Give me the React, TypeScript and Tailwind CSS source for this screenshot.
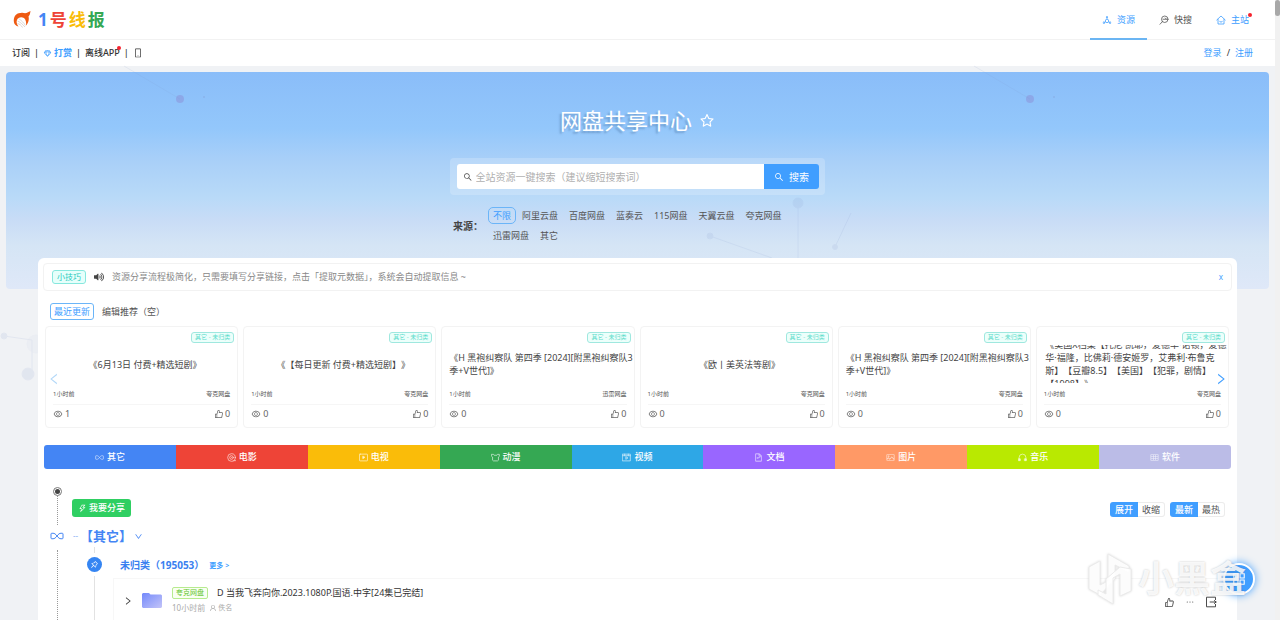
import type { ReactNode } from 'react';
import {
  AiOutlineAppstore,
  AiOutlineDeploymentUnit,
  AiOutlineDown,
  AiOutlineEllipsis,
  AiOutlineEye,
  AiOutlineFileText,
  AiOutlineLeft,
  AiOutlineLike,
  AiOutlineMobile,
  AiOutlinePicture,
  AiOutlinePushpin,
  AiOutlineRight,
  AiOutlineSearch,
  AiOutlineSketch,
  AiOutlineStar,
  AiOutlineTable,
  AiOutlineThunderbolt,
  AiOutlineUser,
} from 'react-icons/ai';
import { FaVolumeUp } from 'react-icons/fa';

type IconProps = { className?: string; children?: ReactNode };

function Stroke({ className, children }: IconProps) {
  return (
    <svg className={className} viewBox="0 0 20 20" fill="none" stroke="currentColor" strokeWidth="1.6" strokeLinejoin="round" strokeLinecap="round">
      {children}
    </svg>
  );
}

const QuickIcon = ({ className }: IconProps) => (
  <Stroke className={className}>
    <circle cx="11.5" cy="8.5" r="6.5" />
    <path d="M7 13 2 18.5M8 8.5h7M12.5 6l2.5 2.5" />
  </Stroke>
);

const HomeIcon = ({ className }: IconProps) => (
  <Stroke className={className}>
    <path d="M1.5 10 10 2l8.500 8M4 8.500V18h12V8.500M7 12.500c1 2.500 5 2.500 6 0" />
  </Stroke>
);

const ExportIcon = ({ className }: IconProps) => (
  <Stroke className={className}>
    <path d="M17.500 6V2h-15v16h15v-4M8.500 10h10M15.500 7.500l3 2.500-3 2.500" />
  </Stroke>
);

const InfinityIcon = ({ className }: IconProps) => (
  <svg className={className} viewBox="0 0 28 16" fill="none" stroke="currentColor" strokeWidth="2">
    <path d="M14 8C11 4 9 2.500 6 2.500H3.500Q2 2.500 2 4v8q0 1.500 1.500 1.500H6C9 13.500 11 12 14 8s5-5.500 8-5.500h2.500Q26 2.500 26 4v8q0 1.500-1.500 1.500H22C19 13.500 17 12 14 8Z" />
  </svg>
);

const FilmIcon = ({ className }: IconProps) => (
  <Stroke className={className}>
    <circle cx="10" cy="10" r="8.500" />
    <circle cx="10" cy="10" r="4" />
    <path d="M10 10h.1M15 17h4" />
  </Stroke>
);

const TvIcon = ({ className }: IconProps) => (
  <Stroke className={className}>
    <rect x="1" y="2.500" width="18" height="15" rx="1.500" />
    <path d="M8.500 7.500v5l4-2.500Z" fill="currentColor" />
  </Stroke>
);

const CatIcon = ({ className }: IconProps) => (
  <Stroke className={className}>
    <path d="M1.500 3h4L7 5h6l1.500-2h4v4.500L16.500 9v7l-2 1.500h-9l-2-1.500V9l-2-1.500Z" />
  </Stroke>
);

const VideoIcon = ({ className }: IconProps) => (
  <Stroke className={className}>
    <rect x="1.500" y="2.500" width="17" height="15" />
    <path d="M1.500 6h17M6 2.500V6M14 2.500V6M8.500 9v5l4-2.500Z" />
  </Stroke>
);

const HeadphoneIcon = ({ className }: IconProps) => (
  <Stroke className={className}>
    <path d="M2.500 14v-4a7.500 7.500 0 0 1 15 0v4" />
    <path d="M1.500 13h3.500v4H1.500ZM15 13h3.500v4H15Z" fill="currentColor" />
  </Stroke>
);

const categories = [
  { name: '其它', Icon: InfinityIcon, color: 'bg-[#4485f4] rounded-l-[3px]' },
  { name: '电影', Icon: FilmIcon, color: 'bg-[#ee4437]' },
  { name: '电视', Icon: TvIcon, color: 'bg-[#fabc09]' },
  { name: '动漫', Icon: CatIcon, color: 'bg-[#35a853]' },
  { name: '视频', Icon: VideoIcon, color: 'bg-[#2ea7e6]' },
  { name: '文档', Icon: AiOutlineFileText, color: 'bg-[#9966ff]' },
  { name: '图片', Icon: AiOutlinePicture, color: 'bg-[#ff9966]' },
  { name: '音乐', Icon: HeadphoneIcon, color: 'bg-[#b9e901]' },
  { name: '软件', Icon: AiOutlineTable, color: 'bg-[#bbbce7] rounded-r-[3px]' },
];

const sources = ['不限', '阿里云盘', '百度网盘', '蓝奏云', '115网盘', '天翼云盘', '夸克网盘', '迅雷网盘', '其它'];

const recent = [
  { title: '《6月13日 付费+精选短剧》', drive: '夸克网盘', views: 1 },
  { title: '《【每日更新 付费+精选短剧】》', drive: '夸克网盘', views: 0 },
  { title: '《H 黑袍纠察队 第四季 [2024][附黑袍纠察队3季+V世代]》', drive: '迅雷网盘', views: 0 },
  { title: '《欧丨美英法等剧》', drive: '夸克网盘', views: 0 },
  { title: '《H 黑袍纠察队 第四季 [2024][附黑袍纠察队3季+V世代]》', drive: '夸克网盘', views: 0 },
  {
    title: '《美国X档案【托尼·凯耶，爱德华·诺顿，爱德\n华·福隆，比佛莉·德安姬罗，艾弗利·布鲁克\n斯】【豆瓣8.5】【美国】【犯罪，剧情】\n【1998】》',
    drive: '夸克网盘',
    views: 0,
  },
];

function Network() {
  return (
    <svg className="pointer-events-none absolute top-0 left-0 h-[620px] w-[1280px]" fill="#7f93c8" stroke="#7f93c8">
      <g opacity="0.3" stroke="none">
        <circle cx="180" cy="99" r="4" fill="#8a6fc0" />
        <circle cx="1030" cy="99" r="4" fill="#8a6fc0" />
        <circle cx="204" cy="97" r="1" />
        <circle cx="1054" cy="97" r="1" />
      </g>
      <g opacity="0.12">
        <path d="M124 66 180 99M974 66 1030 99M798 203v55M710 236l62 22M835 247l16-34M4 336l28 4v34" fill="none" />
        <circle cx="798" cy="203" r="5" />
        <circle cx="835" cy="247" r="2.500" />
        <circle cx="710" cy="236" r="3" />
        <circle cx="28" cy="374" r="6" />
        <circle cx="4" cy="336" r="3" />
        <circle cx="36" cy="344" r="9" opacity="0.4" />
      </g>
    </svg>
  );
}

function Header() {
  const item = 'relative flex h-10 items-center gap-[5px] px-3';
  return (
    <header className="relative bg-white">
      <div className="flex h-10 items-center justify-between border-b border-[#f2f2f2] pr-[14px] pl-3">
        <a href="#home" className="flex items-center gap-[6px]">
          <svg className="size-5" viewBox="0 0 40 40">
            <path d="M4 25C2 14 8 5 18 6c4-1 7 1 11 0l8-4c-1 5-1 8-4 11 2 7-1 14-5 18 1-6 0-11-4-15-6-3-12-1-14 4-2 4 0 9 3 13C8 32 5 29 4 25Z" fill="#ee5a12" />
            <path d="M11 22c5 2 10 6 15 12M13 17c6 4 11 9 14 14M11 27c4 1 8 4 10 8" fill="none" stroke="#c9bdb7" strokeWidth="1.200" />
          </svg>
          <span className="flex gap-[2px] text-[17px] leading-5 font-bold">
            <span className="text-[#4485f4]">1</span>
            <span className="text-[#ee4437]">号</span>
            <span className="text-[#fabc09]">线</span>
            <span className="text-[#35a853]">报</span>
          </span>
        </a>
        <nav className="flex h-full">
          <a href="#res" className={`${item} text-[#409eff]`}>
            <AiOutlineDeploymentUnit className="size-[10px]" />
            资源
            <span className="absolute inset-x-0 bottom-0 h-[2px] bg-[#6bb5f3]" />
          </a>
          <a href="#quick" className={item}>
            <QuickIcon className="size-[10px]" />
            快搜
          </a>
          <a href="#main" className={`${item} text-[#409eff]`}>
            <HomeIcon className="size-[10px]" />
            主站
            <span className="absolute top-[13px] right-[9px] size-1 rounded-full bg-[#f5222d]" />
          </a>
        </nav>
      </div>
      <div className="flex h-[26px] items-center justify-between pr-[22px] pl-3 text-[#333]">
        <div className="flex items-center gap-1 font-medium">
          <a href="#subscribe">订阅</a>
          <span>|</span>
          <a href="#reward" className="flex items-center gap-[2px] font-bold text-[#409eff]">
            <AiOutlineSketch className="size-[9px]" />
            打赏
          </a>
          <span>|</span>
          <a href="#app" className="relative">
            离线APP
            <span className="absolute top-0 -right-px size-1 rounded-full bg-[#f5222d]" />
          </a>
          <span>|</span>
          <a href="#mobile" aria-label="手机版">
            <AiOutlineMobile className="size-[10px]" />
          </a>
        </div>
        <div className="flex gap-[5px]">
          <a href="#login" className="text-[#409eff]">登录</a>
          <span>/</span>
          <a href="#register" className="text-[#409eff]">注册</a>
        </div>
      </div>
    </header>
  );
}

function Hero() {
  return (
    <section className="mx-[6px] mt-[6px] h-[217px] rounded-[4px] bg-[linear-gradient(180deg,#8abdf9_0%,#93c7fb_26%,#a8cff8_40%,#b9daf8_58%,#c8dcf6_68%,#d5e5f5_80%,#dfe8f8_100%)]">
      <h1 className="flex items-center justify-center gap-[7px] pt-[33px] text-[22px] leading-[30px] text-white">
        <span className="[text-shadow:-2px_2px_2px_rgba(70,110,160,0.45)]">网盘共享中心</span>
        <AiOutlineStar className="mt-[2px] size-4" />
      </h1>
      <div className="mx-auto mt-[23px] w-[375px]">
        <form className="flex rounded-[4px] bg-white/20 py-[6px] pr-[6px] pl-[7px]">
          <label className="flex h-[25px] flex-1 items-center gap-[3px] rounded-l-[3px] bg-white pl-[6px]">
            <AiOutlineSearch className="size-[10px] text-[#444]" />
            <input
              type="text"
              aria-label="搜索"
              placeholder="全站资源一键搜索（建议缩短搜索词）"
              className="w-full text-[10px] outline-none placeholder:text-[#b0b0b0]"
            />
          </label>
          <button type="button" className="flex w-[55px] items-center justify-center gap-[5px] rounded-r-[3px] bg-[#409eff] text-[10px] text-white">
            <AiOutlineSearch className="size-[10px]" />
            搜索
          </button>
        </form>
        <div className="mt-3 flex items-center pl-[3px]">
          <span className="w-[35px] text-[10px] font-bold whitespace-nowrap text-[#444]">来源：</span>
          <div className="flex flex-1 flex-wrap gap-x-px gap-y-[3px] text-[#555]">
            {sources.map((s, i) => (
              <button
                key={s}
                type="button"
                className={`h-[17px] rounded-[5px] border px-1 ${i === 0 ? 'border-[#6bb5f8] text-[#409eff]' : 'border-transparent'}`}
              >
                {s}
              </button>
            ))}
          </div>
        </div>
      </div>
    </section>
  );
}

function RecentCard({ title, drive, views }: (typeof recent)[number]) {
  return (
    <article className="h-[102px] rounded-[4px] border border-[#f3f3f3] bg-white px-[7px] pt-[5px]">
      <div className="-mr-1 flex justify-end">
        <span className="h-[11px] rounded-[3px] border border-[#9fe8df] bg-[#ecfffb] px-[3px] text-[6px] leading-[9px] text-[#5fdccb]">其它 - 未归类</span>
      </div>
      <div className="mt-[2px] -mr-[7px] flex h-[38px] items-center justify-center overflow-hidden">
        <h3 className="text-[9px] leading-[13px] whitespace-pre-line text-[#444] [text-spacing-trim:space-all]">{title}</h3>
      </div>
      <div className="mt-[5px] flex justify-between text-[6px] leading-[13px] text-[#555]">
        <span>1小时前</span>
        <span>{drive}</span>
      </div>
      <div className="mt-[3px] flex h-[19px] items-center justify-between border-t border-[#f6f6f6] text-[#666]">
        <span className="flex items-center gap-[2px]">
          <AiOutlineEye className="size-[10px]" />
          {views}
        </span>
        <span className="flex items-center gap-px">
          <AiOutlineLike className="size-[10px]" />0
        </span>
      </div>
    </article>
  );
}

function Toggle({ on, off }: { on: string; off: string }) {
  return (
    <div className="flex h-[15px] leading-[13px]">
      <button type="button" className="w-7 rounded-l-[3px] bg-[#409eff] font-medium text-white">{on}</button>
      <button type="button" className="w-[27px] rounded-r-[3px] border border-l-0 border-[#ececec] text-[#555]">{off}</button>
    </div>
  );
}

function Timeline() {
  const dotted = 'w-px flex-1 border-l border-dotted border-[#999]';
  return (
    <div className="flex flex-1 flex-col px-[6px] pt-4">
      <div className="flex h-10">
        <div className="flex w-[26px] flex-col items-center pt-[2px]">
          <span className="flex size-[9px] items-center justify-center rounded-full border border-[#777]">
            <span className="size-[5px] rounded-full bg-[#444]" />
          </span>
          <span className={dotted} />
        </div>
        <div className="flex flex-1 items-start justify-between pt-[14px] pr-[6px] pl-[2px]">
          <button type="button" className="flex h-[18px] items-center gap-[2px] rounded-[3px] bg-[#2fcf62] px-[6px] font-medium text-white">
            <AiOutlineThunderbolt className="size-[9px]" />
            我要分享
          </button>
          <div className="mt-[3px] flex gap-[5px]">
            <Toggle on="展开" off="收缩" />
            <Toggle on="最新" off="最热" />
          </div>
        </div>
      </div>
      <div className="flex h-[22px] items-center text-[#4485f4]">
        <span className="flex w-[26px] justify-center">
          <InfinityIcon className="h-2 w-[14px]" />
        </span>
        <span className="w-[10px] pl-[3px] text-[8px] leading-3 text-[#8fb4f5]">--</span>
        <h2 className="text-[13px] leading-[18px] font-bold">【其它】</h2>
        <AiOutlineDown className="ml-[2px] size-[9px]" />
      </div>
      <div className="flex flex-1">
        <div className="flex w-[26px] flex-col items-center pt-[3px]">
          <span className={dotted} />
        </div>
        <div className="flex w-[43px] flex-col pl-[17px]">
          <span className="ml-[7px] h-[6px] w-px bg-[#e2e2e2]" />
          <span className="my-1 flex size-[15px] items-center justify-center rounded-full bg-[#3585f2] text-white">
            <AiOutlinePushpin className="size-[9px]" />
          </span>
          <span className="ml-[7px] w-px flex-1 bg-[#e2e2e2]" />
        </div>
        <div className="flex flex-1 flex-col pt-[11px]">
          <div className="flex items-center gap-[5px] pl-[7px] leading-[15px] font-bold">
            <h3 className="text-[10px] text-[#3a7ff0]">未归类（195053）</h3>
            <a href="#more" className="text-[7px] text-[#409eff]">更多 &gt;</a>
          </div>
          <div className="mt-[5px] flex min-h-[41px] flex-1 items-start border-t border-l border-[#f7f7f7] pr-[14px] pl-[9px]">
            <AiOutlineRight className="mt-[17px] size-[10px] text-[#333]" />
            <svg className="mt-[13px] ml-[9px] h-4 w-5" viewBox="0 0 20 16">
              <defs>
                <linearGradient id="folder" x1="0" y1="0" x2="1" y2="1">
                  <stop offset="0" stopColor="#7389fb" />
                  <stop offset="1" stopColor="#c3c4f8" />
                </linearGradient>
              </defs>
              <path d="M0 2 1 1h6l1.500 1.500H19l1 1V15l-1 1H1l-1-1Z" fill="url(#folder)" />
            </svg>
            <div className="ml-[10px] pt-[6px]">
              <div className="flex items-center gap-[9px]">
                <span className="h-3 rounded-[2px] border border-[#b7eb8f] bg-[#f9fff2] px-[3px] text-[7px] leading-[10px] text-[#5fc42c]">夸克网盘</span>
                <a href="#item" className="text-[9px] leading-[15px] text-[#333]">D 当我飞奔向你.2023.1080P.国语.中字[24集已完结]</a>
              </div>
              <div className="mt-px flex items-center gap-[4px] text-[8px] leading-[14px] text-[#aaa]">
                <span>10小时前</span>
                <span className="flex items-center gap-px">
                  <AiOutlineUser className="size-2" />
                  <span className="text-[7px]">佚名</span>
                </span>
              </div>
            </div>
            <div className="mt-[17px] ml-auto flex items-center gap-[10px] text-[#444]">
              <button type="button" aria-label="点赞"><AiOutlineLike className="size-[11px]" /></button>
              <button type="button" aria-label="更多"><AiOutlineEllipsis className="size-[10px]" /></button>
              <button type="button" aria-label="打开"><ExportIcon className="size-3" /></button>
            </div>
          </div>
        </div>
      </div>
    </div>
  );
}

function Watermark() {
  return (
    <div className="pointer-events-none absolute right-[34px] bottom-[15px] flex items-center gap-[6px]">
      <svg className="h-[52px] w-[44px] drop-shadow-[0_0_1px_rgba(0,0,0,0.15)]" viewBox="0 0 44 52" fill="#fff" fillOpacity="0.9" stroke="#eaeaea">
        <path d="M1 14 12 8v24l8-4V1l21 12v6L27 12v14l-15 16L1 36Z" />
        <path d="M43 16v22l-11 5V21l-7 4v26L10 42v-5l8 4V26l14-12Z" />
      </svg>
      <span className="text-[36px] leading-[40px] font-bold text-white/85 [text-shadow:0_0_2px_rgba(0,0,0,0.25)]">小黑盒</span>
    </div>
  );
}

export default function App() {
  return (
    <div className="relative flex min-h-screen overflow-hidden bg-[#f0f2f5] font-['Noto_Sans','Noto_Sans_CJK_SC',sans-serif] text-[9px] leading-[14px] text-[#555]">
      <div className="flex min-w-0 flex-1 flex-col">
        <Header />
        <Hero />
        <main className="relative z-10 mx-[38px] -mt-[31px] flex flex-1 flex-col rounded-t-[6px] bg-white">
          <div className="mx-[5px] mt-[5px] flex h-7 items-center rounded-[4px] border border-[#f2f2f2] px-2">
            <span className="h-[14px] rounded-[3px] border border-[#87e8de] bg-[#e6fffb] px-1 text-[8px] leading-[12px] text-[#25c9bb]">小技巧</span>
            <FaVolumeUp className="mx-2 size-[10px] text-[#444]" />
            <p className="text-[#888]">资源分享流程极简化，只需要填写分享链接，点击「提取元数据」，系统会自动提取信息 ~</p>
            <button type="button" className="ml-auto text-[8px] text-[#409eff]">x</button>
          </div>
          <div className="mt-3 flex h-[17px] gap-1 pl-3">
            <button type="button" className="rounded-[3px] border border-[#6bb5f8] px-[3px] leading-[15px] text-[#409eff]">最近更新</button>
            <button type="button" className="px-1">编辑推荐（空）</button>
          </div>
          <div className="relative mt-[6px] mr-2 ml-[7px] grid grid-cols-6 gap-x-[5px]">
            {recent.map((r, i) => (
              <RecentCard key={i} {...r} />
            ))}
            <button type="button" aria-label="上一页" className="absolute top-[46px] left-[2px] text-[#b3d8f8]">
              <AiOutlineLeft className="size-[14px]" />
            </button>
            <button type="button" aria-label="下一页" className="absolute top-[46px] right-px text-[#409eff]">
              <AiOutlineRight className="size-[14px]" />
            </button>
          </div>
          <nav className="mx-[6px] mt-[17px] grid h-6 grid-cols-9">
            {categories.map(({ name, Icon, color }) => (
              <a key={name} href={`#${name}`} className={`flex items-center justify-center gap-[3px] font-medium text-white ${color}`}>
                <Icon className="size-[9px] opacity-80" />
                {name}
              </a>
            ))}
          </nav>
          <Timeline />
        </main>
      </div>
      <div className="w-[5px] bg-[#f1f1f1]">
        <div className="h-4 rounded-full bg-[#a8a8a8]" />
      </div>
      <Network />
      <button
        type="button"
        aria-label="菜单"
        className="absolute right-[25px] bottom-[25px] z-20 flex size-8 items-center justify-center rounded-full border-2 border-white bg-[#409eff] text-white shadow-[0_0_8px_#409eff]"
      >
        <AiOutlineAppstore className="size-4" />
      </button>
      <div className="pointer-events-none absolute inset-0 z-30">
        <Watermark />
      </div>
    </div>
  );
}
